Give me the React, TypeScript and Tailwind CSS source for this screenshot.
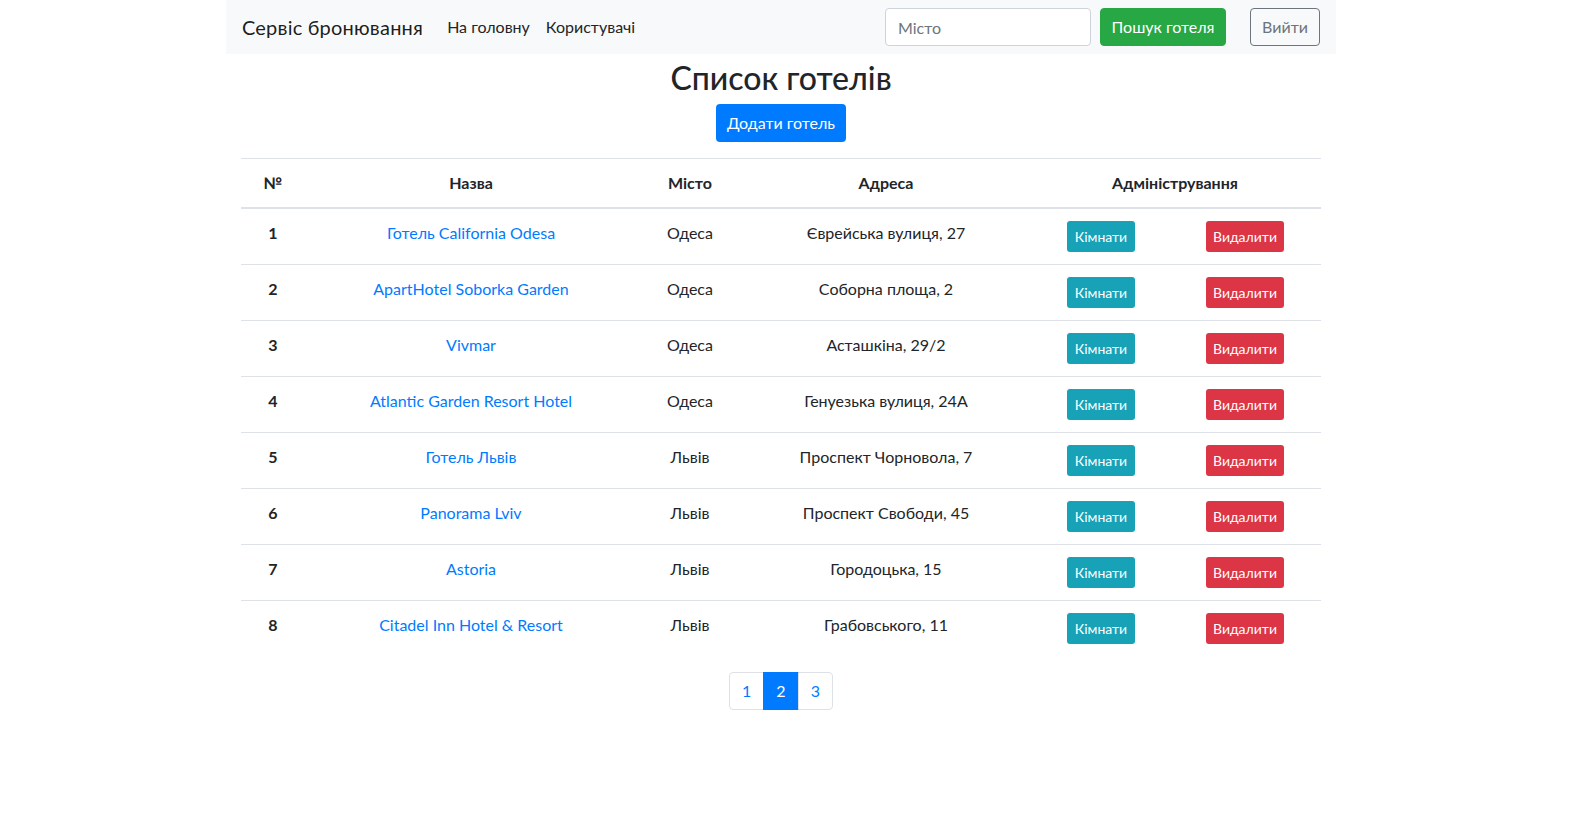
const hotels = [
  { id: 1, name: "Готель California Odesa", city: "Одеса", address: "Єврейська вулиця, 27" },
  { id: 2, name: "ApartHotel Soborka Garden", city: "Одеса", address: "Соборна площа, 2" },
  { id: 3, name: "Vivmar", city: "Одеса", address: "Асташкіна, 29/2" },
  { id: 4, name: "Atlantic Garden Resort Hotel", city: "Одеса", address: "Генуезька вулиця, 24А" },
  { id: 5, name: "Готель Львів", city: "Львів", address: "Проспект Чорновола, 7" },
  { id: 6, name: "Panorama Lviv", city: "Львів", address: "Проспект Свободи, 45" },
  { id: 7, name: "Astoria", city: "Львів", address: "Городоцька, 15" },
  { id: 8, name: "Citadel Inn Hotel & Resort", city: "Львів", address: "Грабовського, 11" },
];

function Navbar() {
  return (
    <nav className="ml-[226px] flex h-[54px] w-[1110px] items-center bg-[#f8f9fa] px-4">
      <a className="mr-4 text-[20px] leading-[30px] tracking-[0.2px] text-black/90">Сервіс бронювання</a>
      <div className="flex">
        <a className="px-2 leading-6 text-[#212529]">На головну</a>
        <a className="px-2 leading-6 text-[#212529]">Користувачі</a>
      </div>
      <div className="ml-auto flex items-center">
        <input
          className="h-[38px] w-[206px] rounded border border-[#ced4da] bg-white px-3 text-base text-[#495057] placeholder:text-[#6c757d]"
          placeholder="Місто"
        />
        <button className="ml-[9px] h-[38px] w-[126px] rounded border border-[#28a745] bg-[#28a745] text-base text-white">
          Пошук готеля
        </button>
        <button className="ml-6 h-[38px] w-[70px] rounded border border-[#6c757d] text-base text-[#6c757d]">
          Вийти
        </button>
      </div>
    </nav>
  );
}

function HotelRow({ id, name, city, address }: (typeof hotels)[number]) {
  const td = "border-t border-[#dee2e6] py-3 align-top leading-6";
  return (
    <tr>
      <th className={`${td} px-3 font-bold`}>{id}</th>
      <td className={`${td} px-3`}>
        <a className="text-[#007bff]">{name}</a>
      </td>
      <td className={`${td} px-3`}>{city}</td>
      <td className={`${td} px-3`}>{address}</td>
      <td className={`${td} px-3`}>
        <button className="h-[31px] w-[68px] rounded-[3px] bg-[#17a2b8] text-[14px] text-white">Кімнати</button>
      </td>
      <td className={`${td} pl-[10px] pr-[14px]`}>
        <button className="h-[31px] w-[78px] rounded-[3px] bg-[#dc3545] text-[14px] text-white">Видалити</button>
      </td>
    </tr>
  );
}

export default function App() {
  return (
    <div className="min-h-screen bg-white text-base text-[#212529]" style={{ fontFamily: "Lato, 'Noto Sans', sans-serif" }}>
      <Navbar />
      <main className="ml-[241px] w-[1080px]">
        <h2 className="mt-[5px] mb-[7px] text-center text-[32px] leading-[1.2] font-medium">Список готелів</h2>
        <div className="mb-4 flex justify-center">
          <button className="h-[38px] w-[130px] rounded bg-[#007bff] text-base text-white">Додати готель</button>
        </div>
        <table className="mb-4 w-full table-fixed border-collapse text-center">
          <colgroup>
            <col className="w-[64px]" />
            <col className="w-[332px]" />
            <col className="w-[106px]" />
            <col className="w-[286px]" />
            <col className="w-[144px]" />
            <col className="w-[148px]" />
          </colgroup>
          <thead>
            <tr>
              <th className="border-t border-b-2 border-[#dee2e6] p-3 leading-6 font-bold">№</th>
              <th className="border-t border-b-2 border-[#dee2e6] p-3 leading-6 font-bold">Назва</th>
              <th className="border-t border-b-2 border-[#dee2e6] p-3 leading-6 font-bold">Місто</th>
              <th className="border-t border-b-2 border-[#dee2e6] p-3 leading-6 font-bold">Адреса</th>
              <th colSpan={2} className="border-t border-b-2 border-[#dee2e6] p-3 leading-6 font-bold">
                Адміністрування
              </th>
            </tr>
          </thead>
          <tbody>
            {hotels.map((h) => (
              <HotelRow key={h.id} {...h} />
            ))}
          </tbody>
        </table>
        <div className="flex justify-center">
          <ul className="flex">
            <li className="rounded-l border border-[#dee2e6] px-3 py-2 leading-5 text-[#007bff]">1</li>
            <li className="-ml-px border border-[#007bff] bg-[#007bff] px-3 py-2 leading-5 text-white">2</li>
            <li className="-ml-px rounded-r border border-[#dee2e6] px-3 py-2 leading-5 text-[#007bff]">3</li>
          </ul>
        </div>
      </main>
    </div>
  );
}
